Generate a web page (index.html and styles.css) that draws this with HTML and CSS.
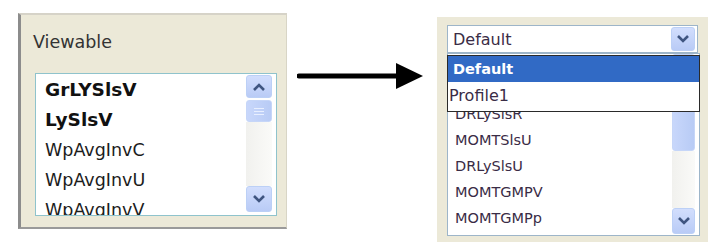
FILE: index.html
```html
<!DOCTYPE html>
<html lang="en">
<head>
<meta charset="UTF-8">
<meta name="viewport" content="width=device-width, initial-scale=1.0">
<title>Viewable profiles</title>
<link rel="stylesheet" href="styles.css">
</head>
<body>

<div class="panel">
    <div class="panel-label">Viewable</div>
    <div class="listbox">
        <div class="items">
            <div class="row bold">GrLYSlsV</div>
            <div class="row bold">LySlsV</div>
            <div class="row">WpAvgInvC</div>
            <div class="row">WpAvgInvU</div>
            <div class="row">WpAvgInvV</div>
        </div>
        <div class="scrollbar">
            <div class="scroll-btn">
                <svg width="14" height="10" viewBox="0 0 14 10"><polyline points="2,8 7,3 12,8" fill="none" stroke="#3f5580" stroke-width="2.6"/></svg>
            </div>
            <div class="thumb"><span></span><span></span><span></span></div>
            <div class="track"></div>
            <div class="scroll-btn down">
                <svg width="14" height="10" viewBox="0 0 14 10"><polyline points="2,2 7,7 12,2" fill="none" stroke="#3f5580" stroke-width="2.6"/></svg>
            </div>
        </div>
    </div>
</div>

<svg class="arrow" width="128" height="32" viewBox="0 0 128 32">
    <line x1="2" y1="16" x2="102" y2="16" stroke="#000" stroke-width="5" stroke-linecap="round"/>
    <polygon points="99,3 126,16 99,29" fill="#000"/>
</svg>

<div class="panel-right">
    <div class="combo">
        <span class="combo-text">Default</span>
        <div class="scroll-btn combo-btn">
            <svg width="14" height="10" viewBox="0 0 14 10"><polyline points="2,2 7,7 12,2" fill="none" stroke="#3f5580" stroke-width="2.6"/></svg>
        </div>
    </div>
    <div class="listbox list-right">
        <div class="items">
            <div class="row small">DRLySlsR</div>
            <div class="row small">MOMTSlsU</div>
            <div class="row small">DRLySlsU</div>
            <div class="row small">MOMTGMPV</div>
            <div class="row small">MOMTGMPp</div>
        </div>
        <div class="scrollbar narrow">
            <div class="thumb tall"><span></span></div>
            <div class="track"></div>
            <div class="scroll-btn down">
                <svg width="14" height="10" viewBox="0 0 14 10"><polyline points="2,2 7,7 12,2" fill="none" stroke="#3f5580" stroke-width="2.6"/></svg>
            </div>
        </div>
    </div>

    <!-- lista aberta do combo, por cima da listbox -->
    <div class="dropdown">
        <div class="option selected">Default</div>
        <div class="option plain">Profile1</div>
    </div>
</div>

</body>
</html>
```

FILE: styles.css
```css
body {
    margin: 0;
    background: #ffffff;
    display: flex;
    align-items: flex-start;
    font-family: "DejaVu Sans", "Liberation Sans", sans-serif;
}

/* painel da esquerda */
.panel {
    box-sizing: border-box;
    width: 269px;
    height: 216px;
    margin: 13px 0 0 18px;
    background: #ece9d8;
    border-left: 3px solid #8c8c8c;
    border-top: 2px solid #d6d3c8;
    border-right: 1px solid #d8d5c6;
    border-bottom: 2px solid #9a9a9a;
}

.panel-label {
    padding: 17px 0 0 12px;
    font-size: 17.5px;
    line-height: 20px;
    color: #333333;
}

.listbox {
    box-sizing: border-box;
    display: flex;
    background: #ffffff;
    border: 1px solid #8fc3cc;
    overflow: hidden;
}

.panel .listbox {
    width: 242px;
    height: 143px;
    margin: 21px 0 0 14px;
}

.items {
    flex: 1;
    overflow: hidden;
    padding: 1px 0 0 9px;
    color: #1c1c1c;
}

.row {
    height: 30px;
    line-height: 30px;
    font-size: 17.5px;
    white-space: nowrap;
}

.row.bold {
    font-weight: bold;
    font-size: 18.5px;
    color: #111111;
}

/* seta entre os paineis */
.arrow {
    margin: 60px 0 0 10px;
}

/* barra de rolagem */
.scrollbar {
    width: 26px;
    margin: 1px 4px 3px 0;
    display: flex;
    flex-direction: column;
}

.scroll-btn {
    height: 21px;
    display: flex;
    align-items: center;
    justify-content: center;
    background: linear-gradient(#d2defd, #b9cbf6);
    border: 1px solid #bcd0f6;
    border-radius: 3px;
}

.scroll-btn.down {
    height: 24px;
}

.thumb {
    height: 20px;
    margin-top: 2px;
    display: flex;
    flex-direction: column;
    align-items: center;
    justify-content: center;
    gap: 2px;
    background: linear-gradient(90deg, #c8d7fb, #b8cbf5);
    border: 1px solid #c6d6f8;
    border-radius: 3px;
}

.thumb span {
    width: 10px;
    height: 1px;
    background: #e8efff;
}

.track {
    flex: 1;
    background: linear-gradient(90deg, #f1f1ee, #fafaf8);
}

/* painel da direita */
.panel-right {
    position: relative;
    box-sizing: border-box;
    width: 271px;
    height: 225px;
    margin: 17px 0 0 12px;
    padding: 8px 0 0 10px;
    background: #ece9d8;
}

.combo {
    box-sizing: border-box;
    width: 251px;
    height: 28px;
    display: flex;
    align-items: center;
    justify-content: space-between;
    background: #ffffff;
    border: 1px solid #9db5c9;
}

.combo-text {
    padding-left: 5px;
    font-size: 16px;
    color: #3a2c46;
}

.combo-btn {
    width: 22px;
    height: 22px;
    margin-right: 2px;
}

.list-right {
    width: 253px;
    height: 183px;
    border-color: #9db5c9;
}

.list-right .items {
    padding: 47px 0 0 7px;
    color: #3a2c46;
}

.row.small {
    height: 26px;
    line-height: 26px;
    font-size: 14.5px;
}

.scrollbar.narrow {
    width: 23px;
    margin: 0 4px 1px 0;
}

.thumb.tall {
    height: 95px;
    margin-top: 0;
}

.dropdown {
    position: absolute;
    left: 10px;
    top: 38px;
    box-sizing: border-box;
    width: 253px;
    height: 57px;
    background: #ffffff;
    border: 1px solid #2a2a2a;
}

.option {
    height: 27px;
    line-height: 27px;
    padding-left: 5px;
    font-size: 16px;
    color: #3a2c46;
}

.option.plain {
    padding-left: 1px;
}

.option.selected {
    height: 26px;
    line-height: 26px;
    background: #316ac5;
    color: #ffffff;
    font-weight: bold;
    font-size: 14.5px;
}
```
